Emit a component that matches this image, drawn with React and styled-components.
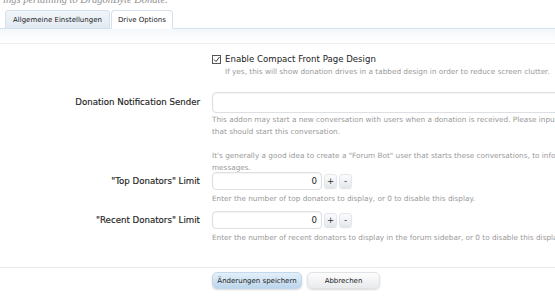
import React from "react";
import styled, { createGlobalStyle } from "styled-components";

const Global = createGlobalStyle`
  html, body { margin: 0; padding: 0; background: #fff; overflow: hidden; }
  body { width: 555px; height: 300px; font-family: "DejaVu Sans", Verdana, sans-serif; }
`;

const Page = styled.div`
  width: 640px;
  background: #fff;
`;

const Description = styled.div`
  margin-top: -7px;
  height: 17px;
  padding-left: 3px;
  font-family: "Liberation Serif", serif;
  font-style: italic;
  font-size: 10.5px;
  line-height: 13px;
  color: #8f8f8f;
  white-space: nowrap;
`;

const TabBar = styled.div`
  display: flex;
  align-items: flex-end;
  gap: 1px;
  padding-left: 5px;
  height: 18px;
  border-bottom: 1px solid #d5e1ec;
`;

const Tab = styled.div`
  height: ${(p) => (p.$active ? "19px" : "18px")};
  margin-bottom: ${(p) => (p.$active ? "-1px" : "0")};
  box-sizing: border-box;
  padding: 0 ${(p) => (p.$active ? "6px" : "7px")};
  display: flex;
  align-items: center;
  font-size: 7px;
  color: #222;
  border: 1px solid #d5e1ec;
  border-bottom: ${(p) => (p.$active ? "1px solid #fff" : "none")};
  border-radius: 4px 4px 0 0;
  background: ${(p) =>
    p.$active ? "#fff" : "linear-gradient(#f1f5f9, #e2eaf2)"};
  white-space: nowrap;
`;

const Band = styled.div`
  height: 14px;
  background: linear-gradient(#f4f8fb, #fff);
  border-bottom: 1px solid #edf0f3;
`;

const Form = styled.div`
  padding-top: 9px;
`;

const Row = styled.div`
  display: grid;
  grid-template-columns: 200px 1fr;
  column-gap: 12px;
  margin-bottom: ${(p) => p.$mb || 0}px;
`;

const Label = styled.div`
  text-align: right;
  font-size: 8.65px;
  color: #1e1e1e;
  line-height: ${(p) => p.$lh || 18}px;
  white-space: nowrap;
  -webkit-text-stroke: 0.15px #1e1e1e;
`;

const Control = styled.div`
  display: flex;
  flex-direction: column;
`;

const CheckLine = styled.div`
  display: flex;
  align-items: center;
  gap: 4px;
  height: 12px;
  font-size: 8.6px;
  color: #222;
  white-space: nowrap;
`;

const Box = styled.span`
  width: 9px;
  height: 9px;
  display: inline-flex;
`;

const Hint = styled.div`
  font-size: 7.3px;
  color: #9a9a9a;
  line-height: 12px;
  white-space: nowrap;
  padding-left: ${(p) => p.$indent || 0}px;
  margin-top: ${(p) => p.$mt || 0}px;
`;

const Gap = styled.div`
  height: 12px;
`;

const TextInput = styled.div`
  box-sizing: border-box;
  height: ${(p) => p.$h || 21}px;
  width: ${(p) => p.$w || "400px"};
  border: 1px solid #dcdfe3;
  border-radius: 4px;
  background: #fff;
  box-shadow: inset 0 1px 2px rgba(0, 0, 0, 0.05);
  display: flex;
  align-items: center;
  justify-content: flex-end;
  padding-right: 4px;
  font-size: 8.6px;
  color: #222;
`;

const SpinRow = styled.div`
  display: flex;
  align-items: center;
  gap: 2px;
`;

const Spin = styled.div`
  width: 13px;
  height: 14px;
  box-sizing: border-box;
  border-radius: 3px;
  border: 1px solid #e3e6ea;
  background: linear-gradient(#fbfcfd, #e4e8ed);
  box-shadow: 0 1px 1px rgba(0, 0, 0, 0.12);
  display: flex;
  align-items: center;
  justify-content: center;
  font-size: 8.6px;
  color: #333;
`;

const Separator = styled.div`
  height: 1px;
  background: #e6ebf0;
  margin-top: 23px;
`;

const Buttons = styled.div`
  display: flex;
  gap: 5px;
  padding: 4px 0 0 212px;
`;

const Button = styled.div`
  height: 17px;
  box-sizing: border-box;
  width: ${(p) => p.$w}px;
  justify-content: center;
  border-radius: 5px;
  display: flex;
  align-items: center;
  font-size: 7px;
  color: #222;
  border: 1px solid ${(p) => (p.$primary ? "#c3d8ea" : "#e0e2e5")};
  background: ${(p) =>
    p.$primary
      ? "linear-gradient(#e4f0fa, #bcd6ec)"
      : "linear-gradient(#fdfdfd, #e8eaed)"};
  box-shadow: 0 1px 2px rgba(0, 0, 0, 0.15);
  white-space: nowrap;
`;

export default function App() {
  return (
    <Page>
      <Global />
      <Description>ings pertaining to DragonByte Donate.</Description>
      <TabBar>
        <Tab>Allgemeine Einstellungen</Tab>
        <Tab $active>Drive Options</Tab>
      </TabBar>
      <Band />
      <Form>
        <Row $mb={14}>
          <div />
          <Control>
            <CheckLine>
              <Box>
                <svg width="9" height="9" viewBox="0 0 9 9">
                  <rect x="0.5" y="0.5" width="8" height="8" fill="#fff" stroke="#555" />
                  <path d="M2 4.5 L4 6.5 L7.5 2" fill="none" stroke="#333" strokeWidth="1" />
                </svg>
              </Box>
              Enable Compact Front Page Design
            </CheckLine>
            <Hint $indent={13} $mt={1}>
              If yes, this will show donation drives in a tabbed design in order to reduce screen clutter.
            </Hint>
          </Control>
        </Row>
        <Row $mb={-2}>
          <Label $lh={21}>Donation Notification Sender</Label>
          <Control>
            <TextInput $h={21} />
            <Hint $mt={1}>
              This addon may start a new conversation with users when a donation is received. Please input
            </Hint>
            <Hint>that should start this conversation.</Hint>
            <Gap />
            <Hint>
              It's generally a good idea to create a "Forum Bot" user that starts these conversations, to inform
            </Hint>
            <Hint>messages.</Hint>
          </Control>
        </Row>
        <Row $mb={6}>
          <Label>"Top Donators" Limit</Label>
          <Control>
            <SpinRow>
              <TextInput $h={18} $w="110px">0</TextInput>
              <Spin>+</Spin>
              <Spin>-</Spin>
            </SpinRow>
            <Hint $mt={3}>Enter the number of top donators to display, or 0 to disable this display.</Hint>
          </Control>
        </Row>
        <Row>
          <Label>"Recent Donators" Limit</Label>
          <Control>
            <SpinRow>
              <TextInput $h={18} $w="110px">0</TextInput>
              <Spin>+</Spin>
              <Spin>-</Spin>
            </SpinRow>
            <Hint $mt={3}>
              Enter the number of recent donators to display in the forum sidebar, or 0 to disable this display.
            </Hint>
          </Control>
        </Row>
      </Form>
      <Separator />
      <Buttons>
        <Button $primary $w={90}>Änderungen speichern</Button>
        <Button $w={73}>Abbrechen</Button>
      </Buttons>
    </Page>
  );
}
